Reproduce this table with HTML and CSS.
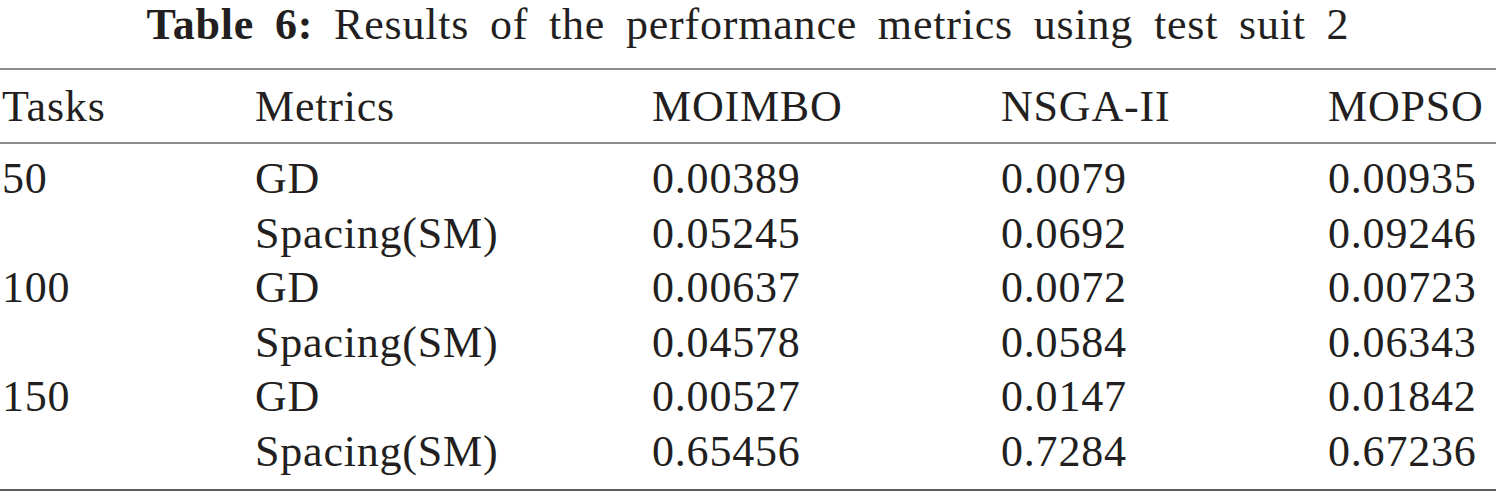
FILE: index.html
```html
<!DOCTYPE html>
<html lang="en">
<head>
    <title>Table 6</title>
    <meta charset="UTF-8">
    <link rel="stylesheet" href="styles.css">
</head>
<body>
    <div class="caption"><span class="label">Table 6:</span> Results of the performance metrics using test suit 2</div>
    <table class="results">
        <colgroup>
            <col class="c-tasks">
            <col class="c-metric">
            <col class="c-moimbo">
            <col class="c-nsga">
            <col class="c-mopso">
        </colgroup>
        <thead>
            <tr>
                <th>Tasks</th>
                <th>Metrics</th>
                <th>MOIMBO</th>
                <th>NSGA-II</th>
                <th>MOPSO</th>
            </tr>
        </thead>
        <tbody>
            <tr>
                <td>50</td>
                <td>GD</td>
                <td>0.00389</td>
                <td>0.0079</td>
                <td>0.00935</td>
            </tr>
            <tr>
                <td></td>
                <td>Spacing(SM)</td>
                <td>0.05245</td>
                <td>0.0692</td>
                <td>0.09246</td>
            </tr>
            <tr>
                <td>100</td>
                <td>GD</td>
                <td>0.00637</td>
                <td>0.0072</td>
                <td>0.00723</td>
            </tr>
            <tr>
                <td></td>
                <td>Spacing(SM)</td>
                <td>0.04578</td>
                <td>0.0584</td>
                <td>0.06343</td>
            </tr>
            <tr>
                <td>150</td>
                <td>GD</td>
                <td>0.00527</td>
                <td>0.0147</td>
                <td>0.01842</td>
            </tr>
            <tr>
                <td></td>
                <td>Spacing(SM)</td>
                <td>0.65456</td>
                <td>0.7284</td>
                <td>0.67236</td>
            </tr>
        </tbody>
    </table>
</body>
</html>
```

FILE: styles.css
```css
body {
    margin: 0;
    background: #ffffff;
    color: #231f20;
    font-family: "Liberation Serif", "Times New Roman", serif;
    font-size: 44px;
    letter-spacing: 0.8px;
}

.caption {
    text-align: center;
    line-height: 49px;
    height: 49px;
    word-spacing: 9px;
    margin-bottom: 19px;
}

.caption .label {
    font-weight: bold;
}

.results {
    width: 100%;
    border-collapse: collapse;
    table-layout: fixed;
    border-top: 2px solid #8c8c8c;
    border-bottom: 2px solid #5c5c5c;
}

.c-tasks { width: 255px; }
.c-metric { width: 397px; }
.c-moimbo { width: 349px; }
.c-nsga { width: 327px; }

.results th,
.results td {
    text-align: left;
    font-weight: normal;
    padding: 0;
    line-height: 54.6px;
    white-space: nowrap;
}

.results th:first-child,
.results td:first-child {
    padding-left: 2px;
}

.results thead th {
    padding-top: 9px;
    padding-bottom: 8px;
    line-height: 55px;
    border-bottom: 2px solid #8c8c8c;
}

.results tbody tr:first-child td {
    padding-top: 8px;
}

.results tbody tr:last-child td {
    padding-bottom: 9px;
}
```
